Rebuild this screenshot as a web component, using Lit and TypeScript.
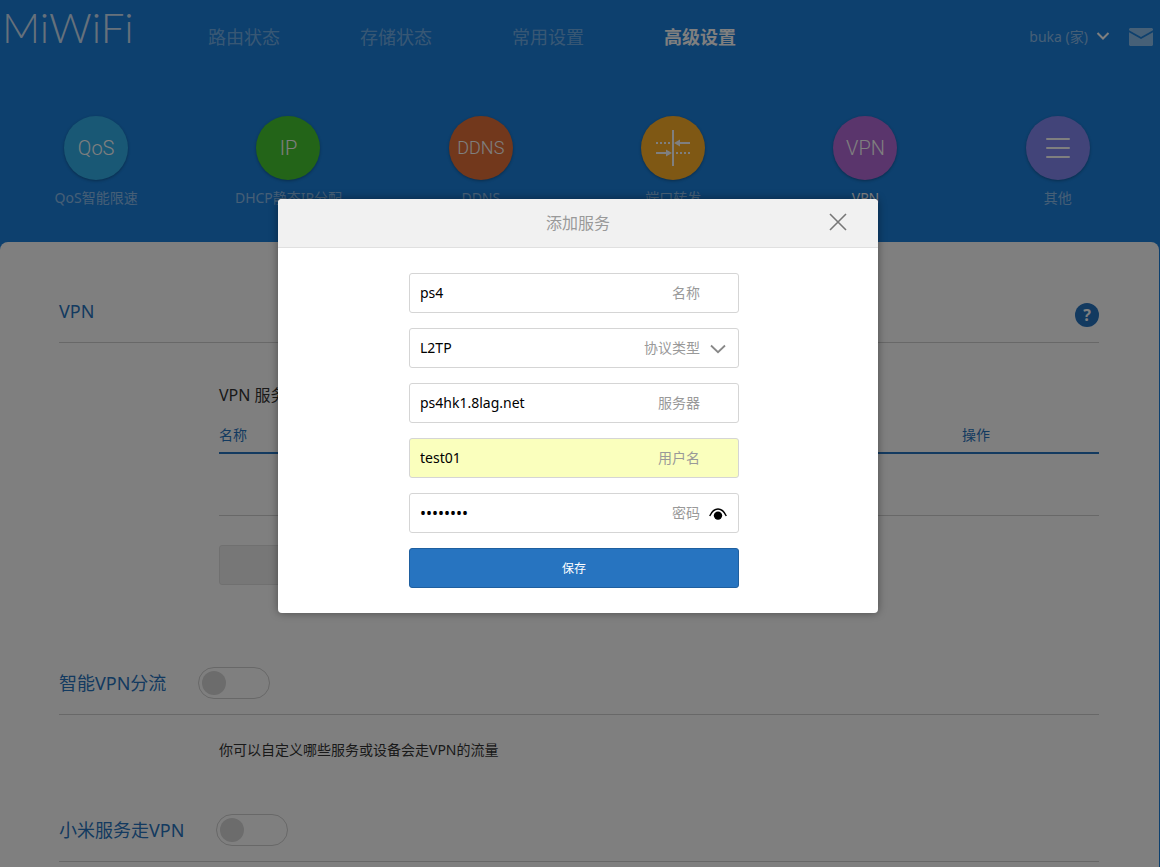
import { LitElement, html, css, svg } from "lit";
import { customElement, state } from "lit/decorators.js";
import { classMap } from "lit/directives/class-map.js";

interface AppEntry {
  id: string;
  label: string;
  text?: string;
  active?: boolean;
}

const NAV = ["路由状态", "存储状态", "常用设置", "高级设置"];

const APPS: AppEntry[] = [
  { id: "qos", label: "QoS智能限速", text: "QoS" },
  { id: "ip", label: "DHCP静态IP分配", text: "IP" },
  { id: "ddns", label: "DDNS", text: "DDNS" },
  { id: "port", label: "端口转发" },
  { id: "vpn", label: "VPN", text: "VPN", active: true },
  { id: "other", label: "其他" },
];

const portIcon = html`<svg class="glyph" width="36" height="36" viewBox="0 0 36 36" aria-hidden="true">
  ${svg`
    <path d="M18 0V36" fill="none" stroke="currentColor" stroke-width="2"/>
    <path d="M1 13H17M21 23H36" fill="none" stroke="currentColor" stroke-width="2" stroke-dasharray="2 2"/>
    <path d="M1 23H13M23 13H35" fill="none" stroke="currentColor" stroke-width="2"/>
    <path d="M11 19.5L17 23L11 26.5ZM25 9.5L19 13L25 16.5Z" fill="currentColor"/>
  `}
</svg>`;

const menuIcon = html`<svg class="glyph" width="24" height="20" viewBox="0 0 24 20" aria-hidden="true">
  <path d="M1 1H23M1 10H23M1 19H23" fill="none" stroke="currentColor" stroke-width="2" stroke-linecap="round" />
</svg>`;

const fonts = css`
  * {
    box-sizing: border-box;
  }
  button,
  input,
  select {
    font: inherit;
    color: inherit;
    margin: 0;
  }
  button {
    cursor: pointer;
  }
`;

@customElement("site-header")
class SiteHeader extends LitElement {
  static styles = [
    fonts,
    css`
      :host {
        display: block;
        color: #fff;
      }
      .bar {
        display: flex;
        align-items: center;
        height: 74px;
        padding: 0 7px 0 2px;
      }
      .logo {
        width: 206px;
        padding-bottom: 20px;
        font: 300 42px/54px Lato, "Noto Sans", sans-serif;
        color: rgba(255, 255, 255, 0.8);
        text-decoration: none;
      }
      .nav {
        display: flex;
        gap: 80px;
        flex: 1;
        font-size: 18px;
        line-height: 24px;
      }
      .nav a {
        color: rgba(255, 255, 255, 0.4);
        text-decoration: none;
      }
      .nav .current {
        color: #fff;
        font-weight: 700;
      }
      .user {
        display: flex;
        align-items: center;
        gap: 8px;
        padding: 0 0 2px;
        margin-right: 19px;
        border: 0;
        background: none;
        font-size: 14px;
        color: rgba(255, 255, 255, 0.5);
      }
      .mail {
        display: flex;
        color: rgba(255, 255, 255, 0.5);
      }
      .apps {
        display: grid;
        grid-template-columns: repeat(6, 1fr);
        padding: 42px 6px 34px 0;
      }
      .app {
        display: flex;
        flex-direction: column;
        align-items: center;
        gap: 8px;
        font-size: 14px;
        line-height: 20px;
        color: rgba(255, 255, 255, 0.5);
        text-decoration: none;
      }
      .app.active {
        color: #fff;
      }
      .disc {
        display: flex;
        align-items: center;
        justify-content: center;
        width: 64px;
        height: 64px;
        border-radius: 50%;
        box-shadow: 0 1px 3px rgba(0, 0, 0, 0.3);
        color: #fff;
        font: 300 20px/28px Roboto, sans-serif;
      }
      .qos { background: #32b0ea; }
      .ip { background: #46c830; }
      .ddns { background: #e47038; font-size: 18px; }
      .port { background: #ffb028; }
      .vpn { background: #b46ad8; }
      .other { background: #8488f2; }
    `,
  ];

  render() {
    return html`
      <header class="bar">
        <a class="logo" href="#">MiWiFi</a>
        <nav class="nav">
          ${NAV.map((n, i) => html`<a href="#" class=${classMap({ current: i === 3 })}>${n}</a>`)}
        </nav>
        <button class="user" type="button">
          <span>buka (家)</span>
          <svg width="14" height="8" viewBox="0 0 14 8" aria-hidden="true">
            <path d="M1.5 1L7 6.5L12.5 1" fill="none" stroke="#fff" stroke-width="2" />
          </svg>
        </button>
        <a class="mail" href="#" aria-label="消息">
          <svg width="24" height="18" viewBox="0 0 24 18" aria-hidden="true">
            <path d="M1 0H23L24 1V2.3L12 9L0 2.3V1Z" fill="currentColor" />
            <path d="M0 4.3L12 11L24 4.3V17L23 18H1L0 17Z" fill="currentColor" />
          </svg>
        </a>
      </header>
      <nav class="apps">
        ${APPS.map(
          (a) => html`<a href="#" class=${classMap({ app: true, active: !!a.active })}>
            <span class="disc ${a.id}">${a.text ?? (a.id === "port" ? portIcon : menuIcon)}</span>
            <span>${a.label}</span>
          </a>`,
        )}
      </nav>
    `;
  }
}

@customElement("vpn-settings")
class VpnSettings extends LitElement {
  static styles = [
    fonts,
    css`
      :host {
        display: block;
        flex: 1;
        margin-right: 1px;
        padding: 53px 60px 0 59px;
        border-radius: 8px 8px 0 0;
        background: #fff;
        color: #333;
        font-size: 14px;
        line-height: 20px;
      }
      .head {
        display: flex;
        align-items: center;
        gap: 32px;
        padding-bottom: 15px;
        border-bottom: 1px solid #d0d0d0;
      }
      .title {
        margin: 0;
        font-size: 18px;
        font-weight: 400;
        line-height: 32px;
        color: #2774c0;
      }
      .help {
        width: 24px;
        height: 24px;
        margin-left: auto;
        align-self: flex-end;
        padding: 0;
        border: 0;
        border-radius: 50%;
        background: #2774c0;
        color: #fff;
        font-size: 16px;
        font-weight: 700;
        line-height: 24px;
      }
      .body {
        padding: 40px 0 82px 160px;
      }
      .body.short {
        padding: 25px 0 54px 160px;
      }
      .sub {
        margin: 0 0 18px;
        font-size: 16px;
        font-weight: 400;
        line-height: 24px;
      }
      .list {
        width: 100%;
        border-collapse: collapse;
        margin-bottom: 29px;
      }
      .list th {
        padding: 0 0 7px;
        border-bottom: 2px solid #2774c0;
        font-weight: 400;
        text-align: left;
        color: #2774c0;
      }
      .list .ops {
        width: 137px;
      }
      .list td {
        height: 62px;
        padding: 0;
        border-bottom: 1px solid #d0d0d0;
      }
      .add {
        display: block;
        width: 50%;
        height: 40px;
        border: 1px solid #e0e0e0;
        border-radius: 3px;
        background: #efefef;
        color: #999;
      }
      .desc {
        margin: 0;
      }
      .switch {
        appearance: none;
        display: flex;
        align-items: center;
        width: 72px;
        height: 32px;
        padding: 0 3px;
        border: 1px solid #d0d0d0;
        border-radius: 16px;
      }
      .switch::before {
        content: "";
        width: 24px;
        height: 24px;
        border-radius: 50%;
        background: #d8d8d8;
      }
      .switch:checked {
        justify-content: flex-end;
      }
    `,
  ];

  render() {
    return html`
      <section>
        <div class="head">
          <h2 class="title">VPN</h2>
          <button class="help" type="button">?</button>
        </div>
        <div class="body">
          <h3 class="sub">VPN 服务</h3>
          <table class="list">
            <thead>
              <tr>
                <th scope="col">名称</th>
                <th scope="col" class="ops">操作</th>
              </tr>
            </thead>
            <tbody>
              <tr>
                <td colspan="2"></td>
              </tr>
            </tbody>
          </table>
          <button class="add" type="button">添加服务</button>
        </div>
      </section>
      <section>
        <div class="head">
          <label class="title" for="split">智能VPN分流</label>
          <input class="switch" id="split" type="checkbox" />
        </div>
        <div class="body short">
          <p class="desc">你可以自定义哪些服务或设备会走VPN的流量</p>
        </div>
      </section>
      <section>
        <div class="head">
          <label class="title" for="mi">小米服务走VPN</label>
          <input class="switch" id="mi" type="checkbox" />
        </div>
      </section>
    `;
  }
}

@customElement("service-dialog")
class ServiceDialog extends LitElement {
  @state() private reveal = false;

  static styles = [
    fonts,
    css`
      :host {
        position: absolute;
        inset: 0;
        display: flex;
        justify-content: center;
        align-items: flex-start;
        padding: 199px 4px 0 0;
        background: rgba(0, 0, 0, 0.5);
      }
      .dialog {
        width: 600px;
        max-width: 100%;
        border-radius: 4px;
        background: #fff;
        box-shadow: 0 0 8px rgba(0, 0, 0, 0.4);
        overflow: hidden;
      }
      .top {
        display: grid;
        grid-template-columns: 48px 1fr 48px;
        align-items: center;
        height: 49px;
        padding: 0 16px 2px;
        border-bottom: 1px solid #e0e0e0;
        background: #f1f1f1;
      }
      .heading {
        grid-column: 2;
        margin: 0;
        font-size: 16px;
        font-weight: 400;
        text-align: center;
        color: #999;
      }
      .close {
        display: flex;
        justify-content: center;
        padding: 0;
        border: 0;
        background: none;
        color: #777;
      }
      .form {
        display: grid;
        gap: 15px;
        padding: 25px 139px 25px 131px;
      }
      .field {
        display: grid;
        grid-template-columns: 1fr auto 38px;
        align-items: center;
        height: 40px;
        border: 1px solid #d5d5d5;
        border-radius: 3px;
        background: #fff;
        font-size: 14px;
      }
      .field.filled {
        background: #faffbd;
      }
      .control {
        appearance: none;
        width: 100%;
        min-width: 0;
        height: 38px;
        padding: 0 10px 2px;
        border: 0;
        outline: 0;
        background: none;
        color: #000;
      }
      .control[type="password"] {
        padding-bottom: 0;
        font-size: 16px;
      }
      .caption {
        padding-bottom: 2px;
        color: #999;
      }
      .tail {
        display: flex;
        justify-content: center;
        padding: 2px 2px 0 0;
        border: 0;
        background: none;
      }
      .save {
        height: 40px;
        border: 1px solid #1f5f9f;
        border-radius: 3px;
        background: #2774c0;
        color: #fff;
        font-size: 12px;
      }
    `,
  ];

  private field(id: string, label: string, value: string, filled = false) {
    return html`<div class=${classMap({ field: true, filled })}>
      <input class="control" id=${id} type="text" .value=${value} />
      <label class="caption" for=${id}>${label}</label>
    </div>`;
  }

  render() {
    return html`
      <div class="dialog" role="dialog" aria-modal="true" aria-labelledby="heading">
        <div class="top">
          <h2 class="heading" id="heading">添加服务</h2>
          <button class="close" type="button" aria-label="关闭">
            <svg width="18" height="18" viewBox="0 0 18 18" aria-hidden="true">
              <path d="M1 1L17 17M17 1L1 17" fill="none" stroke="currentColor" stroke-width="1.6" />
            </svg>
          </button>
        </div>
        <form class="form" @submit=${(e: Event) => e.preventDefault()}>
          ${this.field("name", "名称", "ps4")}
          <div class="field">
            <select class="control" id="proto">
              <option selected>L2TP</option>
              <option>PPTP</option>
            </select>
            <label class="caption" for="proto">协议类型</label>
            <span class="tail">
              <svg width="16" height="10" viewBox="0 0 16 10" aria-hidden="true">
                <path d="M1 1.5L8 8.2L15 1.5" fill="none" stroke="#888" stroke-width="1.8" />
              </svg>
            </span>
          </div>
          ${this.field("server", "服务器", "ps4hk1.8lag.net")}
          ${this.field("user", "用户名", "test01", true)}
          <div class="field">
            <input class="control" id="pass" type=${this.reveal ? "text" : "password"} .value=${"12345678"} />
            <label class="caption" for="pass">密码</label>
            <button class="tail" type="button" aria-label="显示密码" @click=${() => (this.reveal = !this.reveal)}>
              <svg width="18" height="12" viewBox="0 0 18 12" aria-hidden="true">
                <path d="M0.7 8C3 3 6 1 9 1S15 3 17.3 8" fill="none" stroke="#000" stroke-width="1.4" />
                <circle cx="9" cy="7.6" r="4.2" fill="#000" />
              </svg>
            </button>
          </div>
          <button class="save" type="submit">保存</button>
        </form>
      </div>
    `;
  }
}

@customElement("app-root")
class AppRoot extends LitElement {
  static styles = css`
    :host {
      position: relative;
      display: flex;
      flex-direction: column;
      height: 100vh;
      overflow: hidden;
      background: #1a80dc;
      font-family: "Noto Sans", "Noto Sans CJK SC", sans-serif;
    }
  `;

  render() {
    return html`
      <site-header></site-header>
      <vpn-settings></vpn-settings>
      <service-dialog></service-dialog>
    `;
  }
}
